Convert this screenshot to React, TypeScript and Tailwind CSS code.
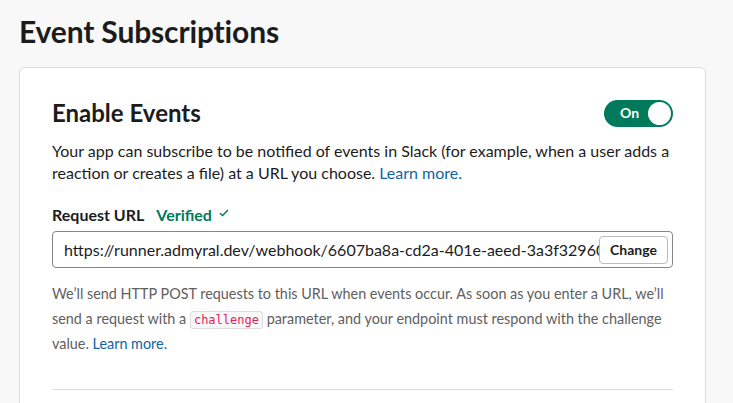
import React from "react";

export default function App() {
  return (
    <div className="w-[733px] h-[403px] overflow-hidden bg-[#f8f8f8] text-[#1d1c1d] font-['Lato',sans-serif]">
      <div className="pl-[19px] pr-[27px]">
        <h1 className="pt-[13px] text-[30px] font-bold leading-[36px] tracking-[-0.15px]">Event Subscriptions</h1>
        <div className="mt-[18px] bg-white border border-[#dddddd] rounded-[6px] px-8 pt-[30px] pb-6">
          <div className="flex items-center justify-between">
            <h2 className="text-[24px] font-bold leading-[30px]">Enable Events</h2>
            <button className="flex items-center h-[27px] w-[69px] rounded-full bg-[#007a5a] pl-[16px] pr-[2px] justify-between">
              <span className="text-white text-[14px] font-bold leading-none">On</span>
              <span className="w-[23px] h-[23px] rounded-full bg-white"></span>
            </button>
          </div>
          <p className="mt-[12px] text-[16px] leading-[22px]">
            Your app can subscribe to be notified of events in Slack (for example, when a user adds a reaction or creates a file) at a URL you choose.{" "}
            <a className="text-[#1264a3]">Learn more.</a>
          </p>
          <div className="mt-[20px] flex items-center text-[16px] leading-[22px] font-bold">
            <span>Request URL</span>
            <span className="ml-[12px] text-[#007a5a]">Verified</span>
            <svg className="ml-[7px] -mt-[5px]" width="10" height="8" viewBox="0 0 10 8" fill="none">
              <path d="M1 4.2L3.6 6.6L9 1" stroke="#007a5a" strokeWidth="1.4" />
            </svg>
          </div>
          <div className="mt-[5px] flex items-center h-[37px] border border-[#868686] rounded-[4px] pl-[11px] pr-[4px] overflow-hidden">
            <span className="flex-1 min-w-0 overflow-hidden whitespace-nowrap text-[16px] leading-[22px]">
              https://runner.admyral.dev/webhook/6607ba8a-cd2a-401e-aeed-3a3f32960c1d/4c9a
            </span>
            <button className="shrink-0 h-[28px] px-[10px] border border-[#bbbbbb] rounded-[4px] bg-white text-[14px] font-bold leading-none">
              Change
            </button>
          </div>
          <p className="mt-[14px] text-[14.4px] leading-[24.5px] text-[#616061]">
            We’ll send HTTP POST requests to this URL when events occur. As soon as you enter a URL, we’ll send a request with a{" "}
            <code className="font-['DejaVu_Sans_Mono',monospace] text-[12px] text-[#e01e5a] bg-[#f8f8f8] border border-[#dddddd] rounded-[3px] px-[3px] py-[1px]">challenge</code>{" "}
            parameter, and your endpoint must respond with the challenge value.{" "}
            <a className="text-[#1264a3]">Learn more.</a>
          </p>
          <div className="mt-[32px] border-t border-[#dddddd]"></div>
        </div>
      </div>
    </div>
  );
}
